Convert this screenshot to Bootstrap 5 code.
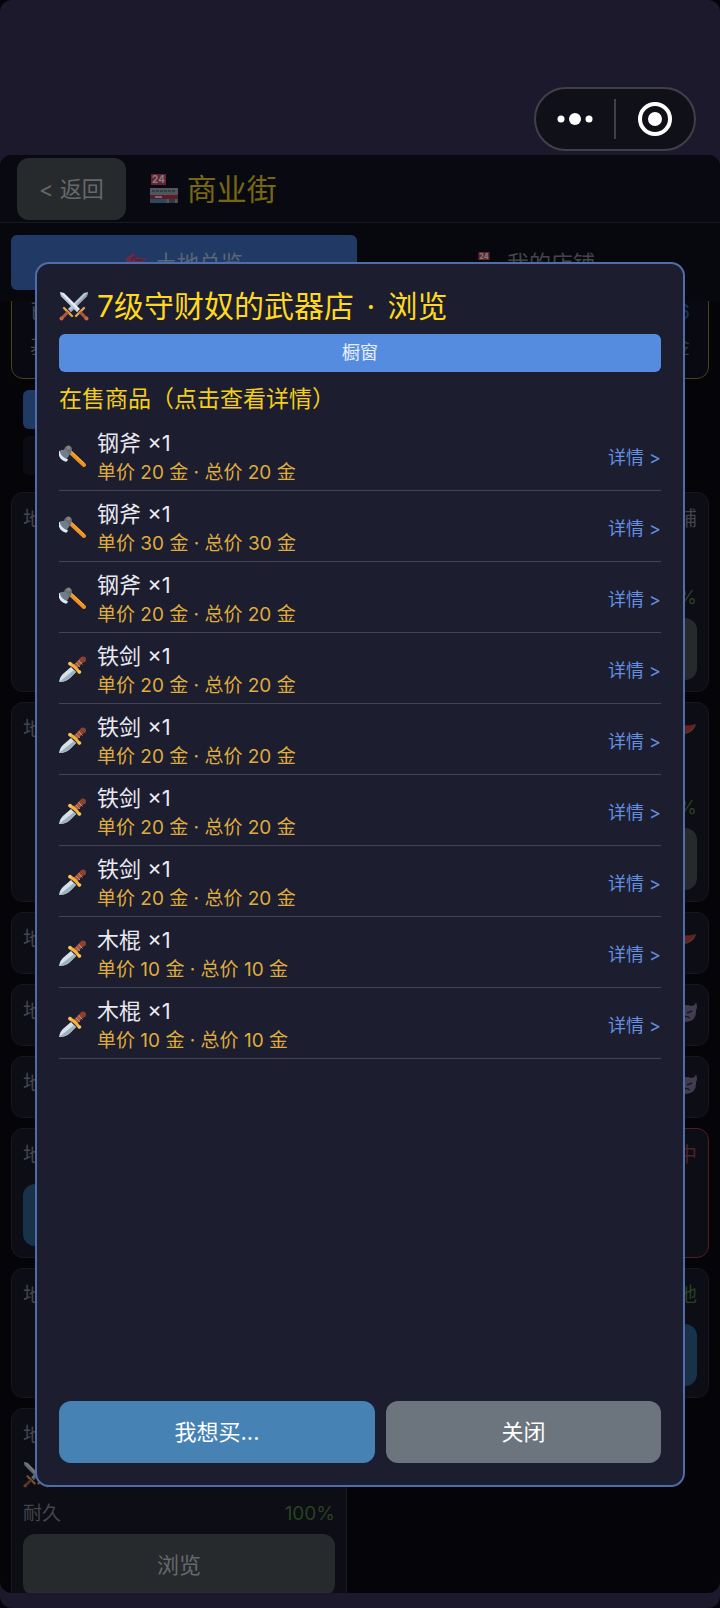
<!DOCTYPE html>
<html lang="zh-CN">
<head>
<meta charset="utf-8">
<meta name="viewport" content="width=device-width, initial-scale=1">
<title>商业街</title>
<link href="https://cdn.jsdelivr.net/npm/bootstrap@5.3.0/dist/css/bootstrap.min.css" rel="stylesheet">
<style>
body{background:#050509;color:#e9e9f2;font-family:Inter,"Noto Sans CJK SC",sans-serif;font-size:22px;line-height:30px}
.shell{background:#1b192b;border-radius:12px;padding-bottom:15px}
.statusbar{height:155px;padding:87px 24px 4px}
.capsule{width:162px;height:64px;border:2px solid #413f4b;border-radius:32px;background:#101018}
.capsule button{flex:1;height:100%;background:none;border:0;padding:0;display:flex;align-items:center;justify-content:center}
.capsule .rule{width:2px;height:40px;background:#413f4b}
.panel{background:#050509;border-radius:12px;min-height:0}
.topbar{background:#090a11;border-bottom:1px solid #191a21;padding:3px 17px 2px;gap:23px}
.action{height:62px;border:0;border-radius:12px;color:#fff;padding:0 22px;font-size:22px}
.dimgrey{background:#272a2d;color:#66686b}
.dimblue{background:#173249}
.action.wanted{background:#4682b4}
.action.closing{background:#6c757d}
.street{color:#776715;font-size:30px}
.tabs{background:#06080e;padding:12px 11px 11px;gap:6px;z-index:1}
.tab{flex:1;height:55px;border:0;border-radius:6px;background:none;color:#46434b}
.tab.current{background:#213a65;color:#596678}
.lots{min-height:0;color:#44454c}
.summary{margin:-30px 11px 11px;padding:29px 18px 12px;border:1px solid #4b3f1e;border-radius:12px;background:#090a11;line-height:37px;font-size:20px}
.summary .toprow{line-height:22px;margin-bottom:6px}
.filter{display:block;width:40%;height:39px;margin:0 23px 7px;border:0;border-radius:6px;background:#0a0b13}
.filter.current{background:#213a65}
.lotgrid{display:grid;grid-template-columns:336fr 351fr;gap:10px 11px;margin:17px 11px 0}
.lot{background:#0c0d15;border:1px solid #17181e;border-radius:12px;padding:11px;display:flex;flex-direction:column;font-size:20px}
.lot .label{margin-bottom:8px;height:30px}
.lot .goods{height:36px}
.lot .wear{height:40px;font-size:19px}
.lot .label + .action{margin-top:6px}
.lot .action{flex:none}
.lot.busy{border-color:#541c23}
.green{color:#29421f}.red{color:#512025}.blue{color:#18334f}
.veil{padding:107px 35px 106px;z-index:2}
.shop{background:#1c1d2e;border:2px solid #506ca9;border-radius:14px;padding:22px}
.shop h1{color:#ffd91c;font-size:30px;line-height:40px;margin:0 0 8px;font-weight:400;gap:8px}
.showcase{height:38px;border:0;border-radius:6px;background:#568ce0;color:#e9f1fc;font-size:18px}
.shop h2{color:#f3cf19;font-size:23px;line-height:36px;font-weight:400;margin:9px 0 3px}
.goodsitem{border-bottom:1px solid #424453;padding:8px 0 2px;gap:11px}
.goodsitem svg{margin-bottom:4px}
.price{color:#dfac3f;font-size:19px}
.more{color:#638fe0;font-size:18px;text-decoration:none}
.i22{width:22px;height:22px}.i27{width:27px;height:27px}.i30{width:30px;height:30px}
svg{flex:none}
.faded{opacity:.48}
.actions{gap:11px}
</style>
</head>
<body>
<svg width="0" height="0" class="position-absolute" aria-hidden="true">
<defs>
<symbol id="swords" viewBox="0 0 30 30">
<path d="M29 1 25 2 9 18l3 3L28 5z" fill="#b9cad6"/><path d="M29 1 11 20l1 1L28 5z" fill="#8fa3b1"/>
<path d="M1 1l4 1 16 16-3 3L2 5z" fill="#e6eef4"/><path d="M1 1l18 19-1 1L2 5z" fill="#b3c3cf"/>
<path d="M5 17l8 8M25 17l-8 8" stroke="#eca246" stroke-width="2.4" stroke-linecap="round"/>
<path d="M9 21l-6 6M21 21l6 6" stroke="#a85a3c" stroke-width="3"/>
<circle cx="2.5" cy="27.5" r="2" fill="#c9673c"/><circle cx="27.5" cy="27.5" r="2" fill="#c9673c"/>
</symbol>
<symbol id="axe" viewBox="0 0 27 27">
<path d="M10 8l15 14" stroke="#ee9222" stroke-width="4" stroke-linecap="round"/>
<path d="M12 8l13 12" stroke="#ffb24a" stroke-width="1"/>
<path d="M5 8Q5 4 8 3q4-1 5 3l-1 4-4 5z" fill="#64717c"/>
<circle cx="9.500" cy="4.500" r="2" fill="#8b8173"/>
<path d="M0 8q4-2 7-1 3 3 3 6-2 1-2 4Q1 15 0 8z" fill="#6f7e8a"/>
<path d="M0 8q1 6 8 9l-1 1Q0 16 0 8z" fill="#dce9f2" stroke="#dce9f2" stroke-width="1.500"/>
</symbol>
<symbol id="dagger" viewBox="0 0 27 27">
<path d="M0 26q1-6 5-9l7-6 5 5-6 6q-4 4-11 4z" fill="#d5e2ea"/>
<path d="M0 26 15 14l2 2-6 6q-4 4-11 4z" fill="#9eb1bf"/>
<path d="M15 12l8-8" stroke="#a7583f" stroke-width="5"/>
<path d="M17 7l4 4M19.500 4.500l4 4" stroke="#c98779" stroke-width="1"/>
<path d="M11 8q5 2 9 8" fill="none" stroke="#f1b33e" stroke-width="3" stroke-linecap="round"/>
<circle cx="11" cy="7.500" r="1.800" fill="#f6c653"/><circle cx="20.500" cy="16" r="1.800" fill="#f6c653"/>
<circle cx="24" cy="3.500" r="3" fill="#8a412d"/>
</symbol>
<symbol id="store" viewBox="0 0 30 30">
<rect x="2" y="0" width="15" height="11" fill="#d23d52"/>
<text x="9.500" y="9" text-anchor="middle" font-size="10" font-weight="700" fill="#fff">24</text>
<path d="M1 14h28v15H1z" fill="#7d8993"/><path d="M1 14h28v7H1z" fill="#9aabb2"/>
<path d="M3 17h24" stroke="#66757e" stroke-width="2" stroke-dasharray="3 1"/>
<path d="M1 21h28v4H1z" fill="#be2f40"/><path d="M6 23h7" stroke="#fff" stroke-width="1.500"/>
<path d="M2 25h14v4H2z" fill="#4690bd"/><path d="M18 25h10v4H18z" fill="#a5aeb5"/><path d="M20 25h6v4h-6z" fill="#536e80"/>
</symbol>
<symbol id="flag" viewBox="0 0 22 22"><path d="M3 7v14" stroke="#8a6a50" stroke-width="2"/><path d="M0 7 8 1l4 4 10 2-9 5-8 0z" fill="#b81a28"/><path d="M6 8l5-4M10 8h8" stroke="#5e1520" stroke-width="2"/></symbol>
<symbol id="melon" viewBox="0 0 27 27"><path d="M1 7q13 3 25 0-4 9-13 9T1 7z" fill="#c5382d"/><path d="M1 9q4 7 12 7t13-9l-1 3q-4 7-12 7T1 9z" fill="#a5834c"/></symbol>
<symbol id="devil" viewBox="0 0 22 22"><path d="M1 0q1 4 5 4 5-2 10 0 4 0 5-4 2 5 0 8 1 11-10 12Q0 19 1 8-1 5 1 0z" fill="#7d6f91"/><path d="M5 9l5 2M17 9l-5 2M7 16q4-3 8 0" fill="none" stroke="#29203a" stroke-width="1.500"/></symbol>
</defs>
</svg>

<div class="shell vh-100 d-flex flex-column">
  <div class="statusbar d-flex justify-content-end">
    <div class="capsule d-flex align-items-center">
      <button type="button" aria-label="更多"><svg width="36" height="14" viewBox="0 0 36 14" fill="#fff"><circle cx="4" cy="7" r="3.500"/><circle cx="18" cy="7" r="6"/><circle cx="32" cy="7" r="3.500"/></svg></button>
      <span class="rule"></span>
      <button type="button" aria-label="关闭小程序"><svg width="34" height="34" viewBox="0 0 34 34"><circle cx="17" cy="17" r="15" fill="none" stroke="#fff" stroke-width="4"/><circle cx="17" cy="17" r="7" fill="#fff"/></svg></button>
    </div>
  </div>

  <main class="panel flex-grow-1 d-flex flex-column position-relative overflow-hidden">
    <header class="topbar d-flex align-items-center">
      <button type="button" class="action dimgrey">&lt; 返回</button>
      <div class="street d-flex align-items-center gap-2"><svg class="i30 faded"><use href="#store"/></svg>商业街</div>
    </header>
    <nav class="tabs d-flex position-relative">
      <button type="button" class="tab current d-flex align-items-center justify-content-center gap-2"><svg class="i22 faded"><use href="#flag"/></svg>土地总览</button>
      <button type="button" class="tab d-flex align-items-center justify-content-center gap-2"><svg class="i22 faded"><use href="#store"/></svg>我的店铺</button>
    </nav>

    <div class="lots flex-grow-1 overflow-hidden">
      <div class="summary">
        <div class="toprow d-flex justify-content-between"><span>已</span><span class="blue">6</span></div>
        <div class="d-flex justify-content-between"><span>基</span><span class="green">金</span></div>
      </div>
      <button type="button" class="filter current" aria-label="全部"></button>
      <button type="button" class="filter" aria-label="筛选"></button>
      <div class="lotgrid">
        <section class="lot"><div class="label">地</div></section>
        <section class="lot"><div class="label text-end">铺</div><div class="goods"></div><div class="wear d-flex align-items-center justify-content-end green">%</div><button type="button" class="action dimgrey" aria-label="浏览"></button></section>
        <section class="lot"><div class="label">地</div></section>
        <section class="lot"><div class="label text-end"><svg class="i27 faded"><use href="#melon"/></svg></div><div class="goods"></div><div class="wear d-flex align-items-center justify-content-end green">%</div><button type="button" class="action dimgrey" aria-label="浏览"></button></section>
        <section class="lot"><div class="label">地</div></section>
        <section class="lot"><div class="label text-end"><svg class="i27 faded"><use href="#melon"/></svg></div></section>
        <section class="lot"><div class="label">地</div></section>
        <section class="lot"><div class="label text-end"><svg class="i22 faded"><use href="#devil"/></svg></div></section>
        <section class="lot"><div class="label">地</div></section>
        <section class="lot"><div class="label text-end"><svg class="i22 faded"><use href="#devil"/></svg></div></section>
        <section class="lot"><div class="label">地</div><button type="button" class="action dimblue" aria-label="购买"></button></section>
        <section class="lot busy"><div class="label text-end red">中</div></section>
        <section class="lot"><div class="label">地</div></section>
        <section class="lot"><div class="label text-end green">地</div><button type="button" class="action dimblue" aria-label="购买"></button></section>
        <section class="lot"><div class="label">地</div><div class="goods"><svg class="i27 faded"><use href="#swords"/></svg></div><div class="wear d-flex align-items-center justify-content-between"><span>耐久</span><span class="green">100%</span></div><button type="button" class="action dimgrey">浏览</button></section>
      </div>
    </div>

    <div class="veil position-absolute top-0 start-0 w-100 h-100">
      <div class="shop h-100 d-flex flex-column" role="dialog" aria-labelledby="shopname">
        <h1 id="shopname" class="d-flex align-items-center"><svg class="i30"><use href="#swords"/></svg><span>7级守财奴的武器店 <span class="px-1">·</span> 浏览</span></h1>
        <button type="button" class="showcase">橱窗</button>
        <h2>在售商品（点击查看详情）</h2>
        <ul class="list-unstyled flex-grow-1 mb-0">
          <li class="goodsitem d-flex align-items-center"><svg class="i27"><use href="#axe"/></svg><div class="flex-grow-1"><div>钢斧 ×1</div><div class="price">单价 20 金 · 总价 20 金</div></div><a class="more" href="#">详情 &gt;</a></li>
          <li class="goodsitem d-flex align-items-center"><svg class="i27"><use href="#axe"/></svg><div class="flex-grow-1"><div>钢斧 ×1</div><div class="price">单价 30 金 · 总价 30 金</div></div><a class="more" href="#">详情 &gt;</a></li>
          <li class="goodsitem d-flex align-items-center"><svg class="i27"><use href="#axe"/></svg><div class="flex-grow-1"><div>钢斧 ×1</div><div class="price">单价 20 金 · 总价 20 金</div></div><a class="more" href="#">详情 &gt;</a></li>
          <li class="goodsitem d-flex align-items-center"><svg class="i27"><use href="#dagger"/></svg><div class="flex-grow-1"><div>铁剑 ×1</div><div class="price">单价 20 金 · 总价 20 金</div></div><a class="more" href="#">详情 &gt;</a></li>
          <li class="goodsitem d-flex align-items-center"><svg class="i27"><use href="#dagger"/></svg><div class="flex-grow-1"><div>铁剑 ×1</div><div class="price">单价 20 金 · 总价 20 金</div></div><a class="more" href="#">详情 &gt;</a></li>
          <li class="goodsitem d-flex align-items-center"><svg class="i27"><use href="#dagger"/></svg><div class="flex-grow-1"><div>铁剑 ×1</div><div class="price">单价 20 金 · 总价 20 金</div></div><a class="more" href="#">详情 &gt;</a></li>
          <li class="goodsitem d-flex align-items-center"><svg class="i27"><use href="#dagger"/></svg><div class="flex-grow-1"><div>铁剑 ×1</div><div class="price">单价 20 金 · 总价 20 金</div></div><a class="more" href="#">详情 &gt;</a></li>
          <li class="goodsitem d-flex align-items-center"><svg class="i27"><use href="#dagger"/></svg><div class="flex-grow-1"><div>木棍 ×1</div><div class="price">单价 10 金 · 总价 10 金</div></div><a class="more" href="#">详情 &gt;</a></li>
          <li class="goodsitem d-flex align-items-center"><svg class="i27"><use href="#dagger"/></svg><div class="flex-grow-1"><div>木棍 ×1</div><div class="price">单价 10 金 · 总价 10 金</div></div><a class="more" href="#">详情 &gt;</a></li>
        </ul>
        <div class="actions d-flex">
          <button type="button" class="action wanted flex-fill">我想买...</button>
          <button type="button" class="action closing flex-fill">关闭</button>
        </div>
      </div>
    </div>
  </main>
</div>
<script src="https://cdn.jsdelivr.net/npm/bootstrap@5.3.0/dist/js/bootstrap.bundle.min.js"></script>
</body>
</html>
